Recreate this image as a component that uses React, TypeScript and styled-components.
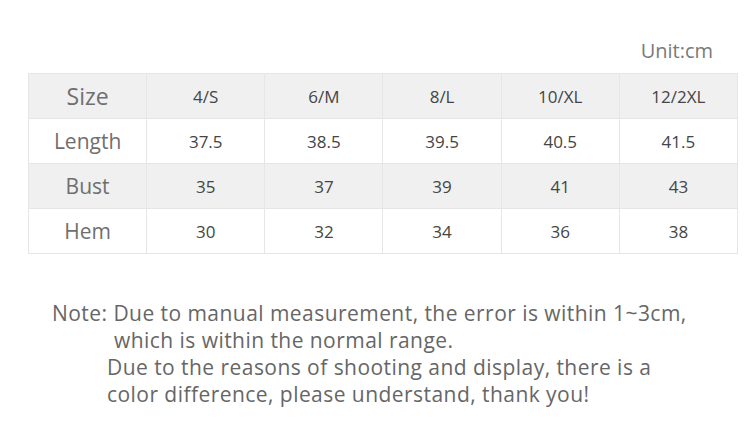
import * as React from "react";
import styled, { createGlobalStyle } from "styled-components";

const GlobalStyle = createGlobalStyle`
  body {
    margin: 0;
    background: #ffffff;
    font-family: "Open Sans", "Noto Sans", sans-serif;
  }
`;

const Page = styled.div`
  width: 750px;
  height: 422px;
  display: flex;
  flex-direction: column;
  overflow: hidden;
`;

const UnitLabel = styled.div`
  align-self: flex-end;
  margin: 36px 37px 0 0;
  height: 37px;
  font-size: 20px;
  line-height: 30px;
  color: #7a7a7a;
`;

const Table = styled.div`
  margin-left: 28px;
  width: 709px;
  display: grid;
  grid-template-columns: repeat(6, 1fr);
  border-top: 1px solid #e6e6e6;
  border-left: 1px solid #e6e6e6;
`;

const Cell = styled.div<{ shaded?: boolean; size?: number; label?: boolean }>`
  height: 44px;
  display: flex;
  align-items: center;
  justify-content: center;
  background: ${p => (p.shaded ? "#f0f0f0" : "#ffffff")};
  border-right: 1px solid #e6e6e6;
  border-bottom: 1px solid #e6e6e6;
  font-size: ${p => p.size ?? 17}px;
  color: ${p => (p.label ? "#6f6f6f" : "#454545")};
`;

const Note = styled.div`
  margin-top: 46px;
  padding-left: 52px;
  font-size: 21px;
  line-height: 27px;
  letter-spacing: 0.45px;
  color: #666666;
`;

const Line = styled.div<{ indent: number }>`
  padding-left: ${p => p.indent}px;
  white-space: nowrap;
`;

const rows = [
  { name: "Size", size: 23, values: ["4/S", "6/M", "8/L", "10/XL", "12/2XL"], shaded: true },
  { name: "Length", size: 21, values: ["37.5", "38.5", "39.5", "40.5", "41.5"], shaded: false },
  { name: "Bust", size: 21, values: ["35", "37", "39", "41", "43"], shaded: true },
  { name: "Hem", size: 21, values: ["30", "32", "34", "36", "38"], shaded: false },
];

export default function App() {
  return (
    <Page>
      <GlobalStyle />
      <UnitLabel>Unit:cm</UnitLabel>
      <Table>
        {rows.map(row => (
          <React.Fragment key={row.name}>
            <Cell shaded={row.shaded} label size={row.size}>
              {row.name}
            </Cell>
            {row.values.map(v => (
              <Cell key={v} shaded={row.shaded}>
                {v}
              </Cell>
            ))}
          </React.Fragment>
        ))}
      </Table>
      <Note>
        <Line indent={0}>Note: Due to manual measurement, the error is within 1~3cm,</Line>
        <Line indent={62}>which is within the normal range.</Line>
        <Line indent={55}>Due to the reasons of shooting and display, there is a</Line>
        <Line indent={55}>color difference, please understand, thank you!</Line>
      </Note>
    </Page>
  );
}
